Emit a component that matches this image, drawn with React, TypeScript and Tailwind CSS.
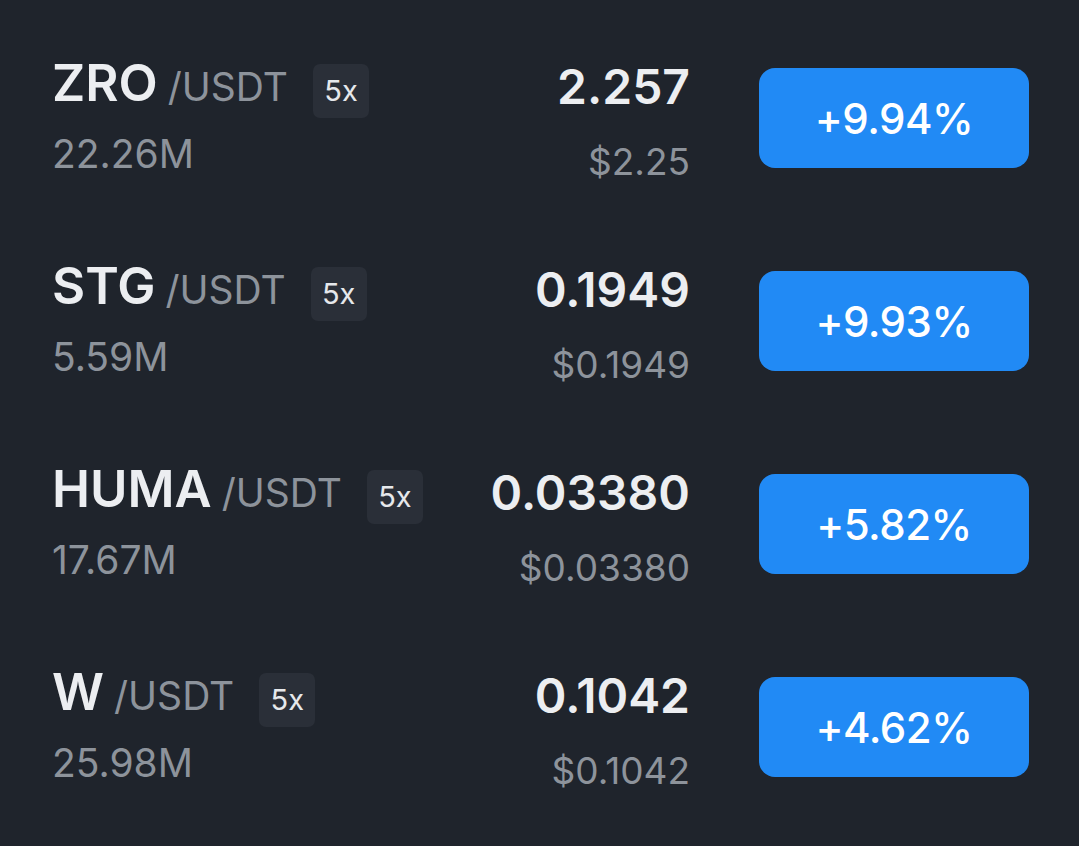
import React from "react";

type Ticker = {
  symbol: string;
  volume: string;
  price: string;
  usd: string;
  change: string;
};

const tickers: Ticker[] = [
  { symbol: "ZRO", volume: "22.26M", price: "2.257", usd: "$2.25", change: "+9.94%" },
  { symbol: "STG", volume: "5.59M", price: "0.1949", usd: "$0.1949", change: "+9.93%" },
  { symbol: "HUMA", volume: "17.67M", price: "0.03380", usd: "$0.03380", change: "+5.82%" },
  { symbol: "W", volume: "25.98M", price: "0.1042", usd: "$0.1042", change: "+4.62%" },
];

function TickerRow({ t }: { t: Ticker }) {
  return (
    <div className="flex h-[203px] items-start">
      {/* Pair + volume */}
      <div className="flex-1 pt-[57px]">
        <div className="flex items-baseline">
          <span className="text-[51px] leading-none font-semibold text-[#eceef1]">
            {t.symbol}
          </span>
          <span className="ml-[10px] text-[39px] leading-none text-[#8d939b]">
            /USDT
          </span>
          <span className="ml-[25px] flex h-[54px] w-[56px] items-center justify-center rounded-[7px] bg-[#2a2f38] text-[29px] leading-none text-[#e6e8eb]">
            5x
          </span>
        </div>
        <div className="mt-[16px] text-[39px] leading-none text-[#8d939b]">
          {t.volume}
        </div>
      </div>

      {/* Price */}
      <div className="flex flex-col items-end pt-[63px]">
        <span className="text-[48px] leading-none font-semibold text-[#eceef1]">
          {t.price}
        </span>
        <span className="mt-[32px] text-[37px] leading-none text-[#8d939b]">
          {t.usd}
        </span>
      </div>

      {/* Change */}
      <div className="ml-[69px] mt-[68px] flex h-[100px] w-[270px] items-center justify-center rounded-[16px] bg-[#218af5] text-[42px] font-medium tracking-[-0.5px] text-white">
        {t.change}
      </div>
    </div>
  );
}

export default function App() {
  return (
    <div
      className="min-h-[846px] w-full bg-[#1f242c] pl-[52px] pr-[50px]"
      style={{ fontFamily: "Inter, 'Noto Sans', sans-serif" }}
    >
      {tickers.map((t) => (
        <TickerRow key={t.symbol} t={t} />
      ))}
    </div>
  );
}
